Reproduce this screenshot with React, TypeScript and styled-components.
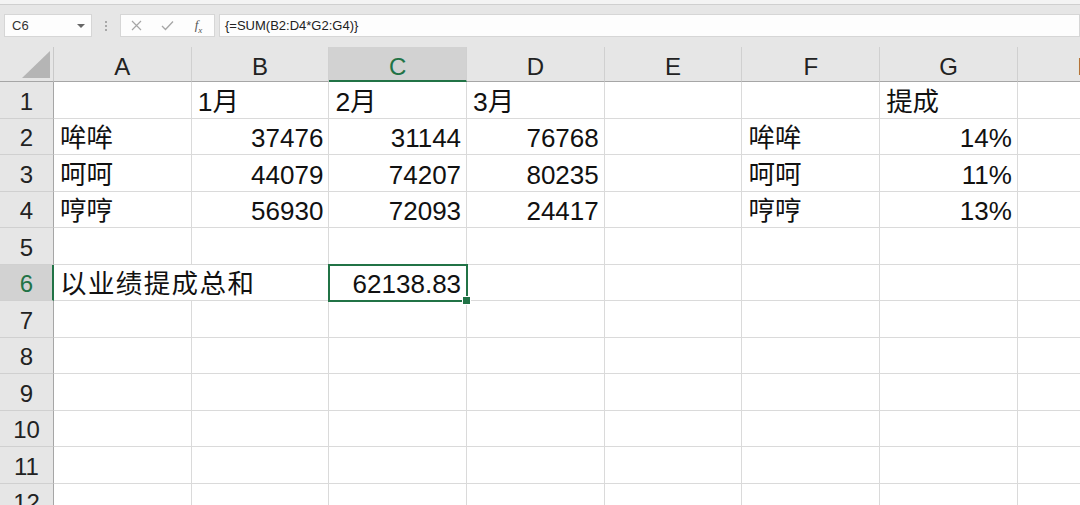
import React from 'react';
import styled, { createGlobalStyle } from 'styled-components';

const GlobalStyle = createGlobalStyle`
  html, body {
    margin: 0;
    padding: 0;
    width: 1080px;
    height: 505px;
    overflow: hidden;
    background: #ffffff;
  }
  * { box-sizing: border-box; }
`;

const GREEN = '#217346';
const COL_W = 137.7;
const ROW_H = 36.5;

const Page = styled.div`
  width: 1080px;
  height: 505px;
  overflow: hidden;
  display: flex;
  flex-direction: column;
  font-family: 'Liberation Sans', 'Noto Sans CJK SC', sans-serif;
  background: #e6e6e6;
`;

const TopStrip = styled.div`
  height: 5px;
  flex: none;
  background: #f3f3f3;
  border-bottom: 1px solid #cfcfcf;
`;

const FormulaRow = styled.div`
  height: 42px;
  flex: none;
  display: flex;
  align-items: flex-start;
  padding: 9px 0 0 4px;
`;

const Box = styled.div<{ $w?: number }>`
  height: 23px;
  background: #fdfdfd;
  border: 1px solid #d6d6d6;
  display: flex;
  align-items: center;
  ${p => (p.$w ? `width: ${p.$w}px; flex: none;` : 'flex: 1;')}
`;

const NameText = styled.span`
  font-size: 13px;
  color: #333;
  padding-left: 7px;
  flex: 1;
`;

const Caret = styled.span`
  width: 0;
  height: 0;
  border-left: 4px solid transparent;
  border-right: 4px solid transparent;
  border-top: 4px solid #666;
  margin-right: 6px;
`;

const Dots = styled.div`
  width: 28px;
  flex: none;
  height: 23px;
  display: flex;
  flex-direction: column;
  align-items: center;
  justify-content: center;
  gap: 2px;
  & > i {
    width: 2px;
    height: 2px;
    background: #a8a8a8;
    display: block;
  }
`;

const IconSlot = styled.span`
  width: 31px;
  display: flex;
  align-items: center;
  justify-content: center;
`;

const Fx = styled.span`
  font-family: 'Liberation Serif', serif;
  font-style: italic;
  font-size: 13px;
  color: #555;
  & > sub {
    font-size: 9px;
  }
`;

const Gap = styled.div`
  width: 4px;
  flex: none;
`;

const FormulaText = styled.span`
  font-size: 13px;
  color: #222;
  padding-left: 5px;
`;

const Sheet = styled.div`
  flex: 1;
  display: grid;
  grid-template-columns: 54px repeat(8, ${COL_W}px);
  grid-template-rows: 35px repeat(12, ${ROW_H}px);
  background: #fff;
  overflow: hidden;
`;

const Corner = styled.div`
  background: #e6e6e6;
  border-right: 1px solid #c9c9c9;
  border-bottom: 1px solid #a6a6a6;
  display: flex;
  align-items: flex-end;
  justify-content: flex-end;
  padding: 0 3px 3px 0;
`;

const ColHead = styled.div<{ $sel?: boolean }>`
  background: ${p => (p.$sel ? '#d2d2d2' : '#e6e6e6')};
  border-right: 1px solid #d0d0d0;
  border-bottom: ${p => (p.$sel ? `2px solid ${GREEN}` : '1px solid #a6a6a6')};
  color: ${p => (p.$sel ? GREEN : '#222')};
  font-size: 24px;
  display: flex;
  align-items: center;
  justify-content: center;
  padding-top: ${p => (p.$sel ? '6px' : '5px')};
`;

const RowHead = styled.div<{ $sel?: boolean }>`
  background: ${p => (p.$sel ? '#d2d2d2' : '#e6e6e6')};
  border-right: ${p => (p.$sel ? `2px solid ${GREEN}` : '1px solid #a6a6a6')};
  border-bottom: 1px solid #d0d0d0;
  color: ${p => (p.$sel ? GREEN : '#222')};
  font-size: 24px;
  display: flex;
  align-items: center;
  justify-content: center;
  padding: 4px 0 0 ${p => (p.$sel ? '1px' : '0')};
`;

const Cell = styled.div<{ $num?: boolean; $cjk?: boolean; $span?: number; $sel?: boolean }>`
  position: relative;
  border-right: 1px solid #dadada;
  border-bottom: 1px solid #dadada;
  display: flex;
  align-items: flex-end;
  justify-content: ${p => (p.$num ? 'flex-end' : 'flex-start')};
  padding: 0 5px 0 6px;
  font-size: ${p => (p.$cjk ? '26.5px' : '26px')};
  line-height: 32px;
  color: #111;
  white-space: nowrap;
  ${p => (p.$span ? `grid-column: span ${p.$span}; letter-spacing: 1.4px;` : '')}
  ${p =>
    p.$sel
      ? `
    outline: 2px solid ${GREEN};
    outline-offset: -1px;
    z-index: 1;
    &::after {
      content: '';
      position: absolute;
      right: -5px;
      bottom: -5px;
      width: 7px;
      height: 7px;
      background: ${GREEN};
      border: 1px solid #fff;
    }
  `
      : ''}
`;

type CellDef = { v?: string; num?: boolean; cjk?: boolean; span?: number; sel?: boolean };

const cols = ['A', 'B', 'C', 'D', 'E', 'F', 'G', 'H'];

const t = (v: string): CellDef => ({ v, cjk: /[\u4e00-\u9fff]/.test(v) });
const n = (v: string): CellDef => ({ v, num: true });
const e: CellDef = {};

const rows: CellDef[][] = [
  [e, t('1月'), t('2月'), t('3月'), e, e, t('提成'), e],
  [t('哞哞'), n('37476'), n('31144'), n('76768'), e, t('哞哞'), n('14%'), e],
  [t('呵呵'), n('44079'), n('74207'), n('80235'), e, t('呵呵'), n('11%'), e],
  [t('哼哼'), n('56930'), n('72093'), n('24417'), e, t('哼哼'), n('13%'), e],
  [e, e, e, e, e, e, e, e],
  [{ v: '以业绩提成总和', cjk: true, span: 2 }, { v: '62138.83', num: true, sel: true }, e, e, e, e, e],
  [e, e, e, e, e, e, e, e],
  [e, e, e, e, e, e, e, e],
  [e, e, e, e, e, e, e, e],
  [e, e, e, e, e, e, e, e],
  [e, e, e, e, e, e, e, e],
  [e, e, e, e, e, e, e, e],
];

const SELECTED_COL = 'C';
const SELECTED_ROW = 6;

export default function App() {
  return (
    <Page>
      <GlobalStyle />
      <TopStrip />
      <FormulaRow>
        <Box $w={88}>
          <NameText>C6</NameText>
          <Caret />
        </Box>
        <Dots>
          <i />
          <i />
          <i />
        </Dots>
        <Box $w={95}>
          <IconSlot>
            <svg width="11" height="11" viewBox="0 0 11 11">
              <path d="M1 1 L10 10 M10 1 L1 10" stroke="#a6a6a6" strokeWidth="1.2" fill="none" />
            </svg>
          </IconSlot>
          <IconSlot>
            <svg width="13" height="11" viewBox="0 0 13 11">
              <path d="M1 6 L4.5 9.5 L12 1.5" stroke="#a6a6a6" strokeWidth="1.3" fill="none" />
            </svg>
          </IconSlot>
          <IconSlot>
            <Fx>f<sub>x</sub></Fx>
          </IconSlot>
        </Box>
        <Gap />
        <Box>
          <FormulaText>{'{=SUM(B2:D4*G2:G4)}'}</FormulaText>
        </Box>
      </FormulaRow>
      <Sheet>
        <Corner>
          <svg width="28" height="27" viewBox="0 0 28 27">
            <polygon points="28,0 28,27 0,27" fill="#b5b5b5" />
          </svg>
        </Corner>
        {cols.map(c => (
          <ColHead key={c} $sel={c === SELECTED_COL}>
            {c}
          </ColHead>
        ))}
        {rows.map((r, i) => (
          <React.Fragment key={i}>
            <RowHead $sel={i + 1 === SELECTED_ROW}>{i + 1}</RowHead>
            {r.map((c, j) => (
              <Cell key={j} $num={c.num} $cjk={c.cjk} $span={c.span} $sel={c.sel}>
                {c.v}
              </Cell>
            ))}
          </React.Fragment>
        ))}
      </Sheet>
    </Page>
  );
}
